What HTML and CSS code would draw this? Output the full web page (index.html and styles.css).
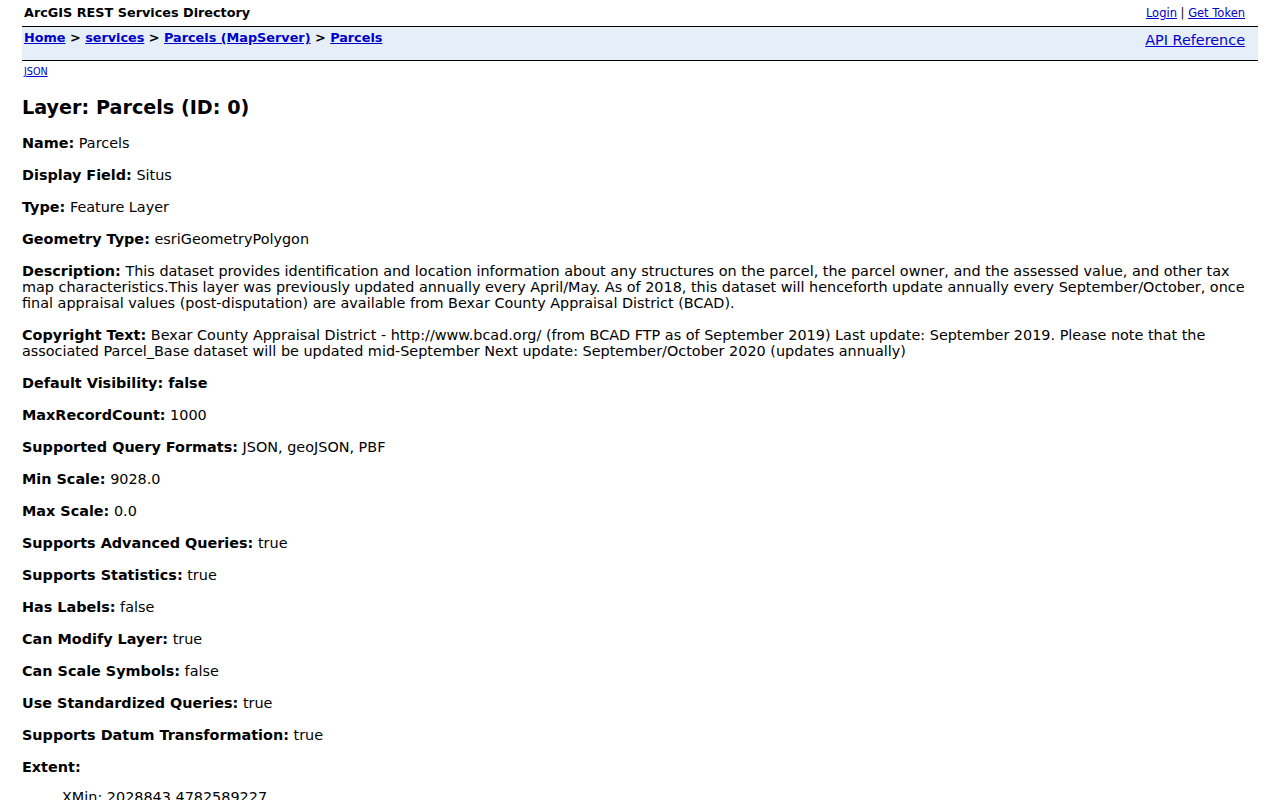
FILE: index.html
```html
<!DOCTYPE html>
<html lang="en">

<head>
    <meta charset="UTF-8">
    <title>Layer: Parcels (ID: 0)</title>
    <link rel="stylesheet" href="styles.css">
</head>

<body>
    <div class="header">
        <div class="site-title">ArcGIS REST Services Directory</div>
        <div class="user-links">
            <a href="#">Login</a> | <a href="#">Get Token</a>
        </div>
    </div>
    <div class="nav">
        <div class="breadcrumbs">
            <a href="#">Home</a> &gt; <a href="#">services</a> &gt; <a href="#">Parcels (MapServer)</a> &gt; <a href="#">Parcels</a>
        </div>
        <a class="api-ref" href="#">API Reference</a>
    </div>

    <div class="formats">
        <a href="#">JSON</a>
    </div>

    <div class="rest-body">
        <h2>Layer: Parcels (ID: 0)</h2>

        <p><b>Name:</b> Parcels</p>
        <p><b>Display Field:</b> Situs</p>
        <p><b>Type:</b> Feature Layer</p>
        <p><b>Geometry Type:</b> esriGeometryPolygon</p>
        <p><b>Description:</b> This dataset provides identification and location information about any structures on the parcel, the parcel owner, and the assessed value, and other tax map characteristics.This layer was previously updated annually every April/May. As of 2018, this dataset will henceforth update annually every September/October, once final appraisal values (post-disputation) are available from Bexar County Appraisal District (BCAD).</p>
        <p><b>Copyright Text:</b> Bexar County Appraisal District - http://www.bcad.org/ (from BCAD FTP as of September 2019) Last update: September 2019. Please note that the associated Parcel_Base dataset will be updated mid-September Next update: September/October 2020 (updates annually)</p>
        <p><b>Default Visibility: false</b></p>
        <p><b>MaxRecordCount:</b> 1000</p>
        <p><b>Supported Query Formats:</b> JSON, geoJSON, PBF</p>
        <p><b>Min Scale:</b> 9028.0</p>
        <p><b>Max Scale:</b> 0.0</p>
        <p><b>Supports Advanced Queries:</b> true</p>
        <p><b>Supports Statistics:</b> true</p>
        <p><b>Has Labels:</b> false</p>
        <p><b>Can Modify Layer:</b> true</p>
        <p><b>Can Scale Symbols:</b> false</p>
        <p><b>Use Standardized Queries:</b> true</p>
        <p><b>Supports Datum Transformation:</b> true</p>
        <p class="extent-title"><b>Extent:</b></p>
        <ul class="extent">
            <li>XMin: 2028843.4782589227</li>
            <li>YMin: 13651188.456913516</li>
            <li>XMax: 2230546.2510212064</li>
            <li>YMax: 13845497.478260875</li>
            <li>Spatial Reference: 2278 (2278)</li>
        </ul>
    </div>
</body>

</html>
```

FILE: styles.css
```css
html, body {
    margin: 0;
    background: #fff;
    font-family: "DejaVu Sans", Verdana, sans-serif;
    color: #000;
}

a {
    color: #0000cc;
}

.header {
    display: flex;
    justify-content: space-between;
    align-items: flex-end;
    margin: 0 22px;
    padding: 6px 13px 6px 2px;
    border-bottom: 1px solid #000;
}

.site-title {
    font-size: 12.8px;
    font-weight: bold;
    line-height: 14px;
}

.user-links {
    font-size: 11.5px;
    line-height: 14px;
}

.nav {
    display: flex;
    justify-content: space-between;
    align-items: flex-start;
    margin: 0 22px;
    height: 33px;
    padding: 0 13px 0 2px;
    background: #e6eef8;
    border-bottom: 1px solid #000;
}

.breadcrumbs {
    font-size: 12.8px;
    font-weight: bold;
    line-height: 15px;
    padding-top: 3px;
}

.api-ref {
    font-size: 14.4px;
    line-height: 17px;
    padding-top: 5px;
}

.formats {
    margin: 5px 24px 0;
    font-size: 9.6px;
    line-height: 12px;
}

.rest-body {
    padding: 0 22px;
    font-size: 14.4px;
    line-height: 16px;
}

.rest-body h2 {
    font-size: 19.2px;
    line-height: 22px;
    margin: 19px 0 16px;
}

.rest-body p {
    margin: 0 0 16px;
}

.rest-body .extent-title {
    margin-bottom: 14px;
}

.extent {
    margin: 0;
    padding-left: 40px;
    list-style: none;
}

.extent li {
    line-height: 16px;
}
```
